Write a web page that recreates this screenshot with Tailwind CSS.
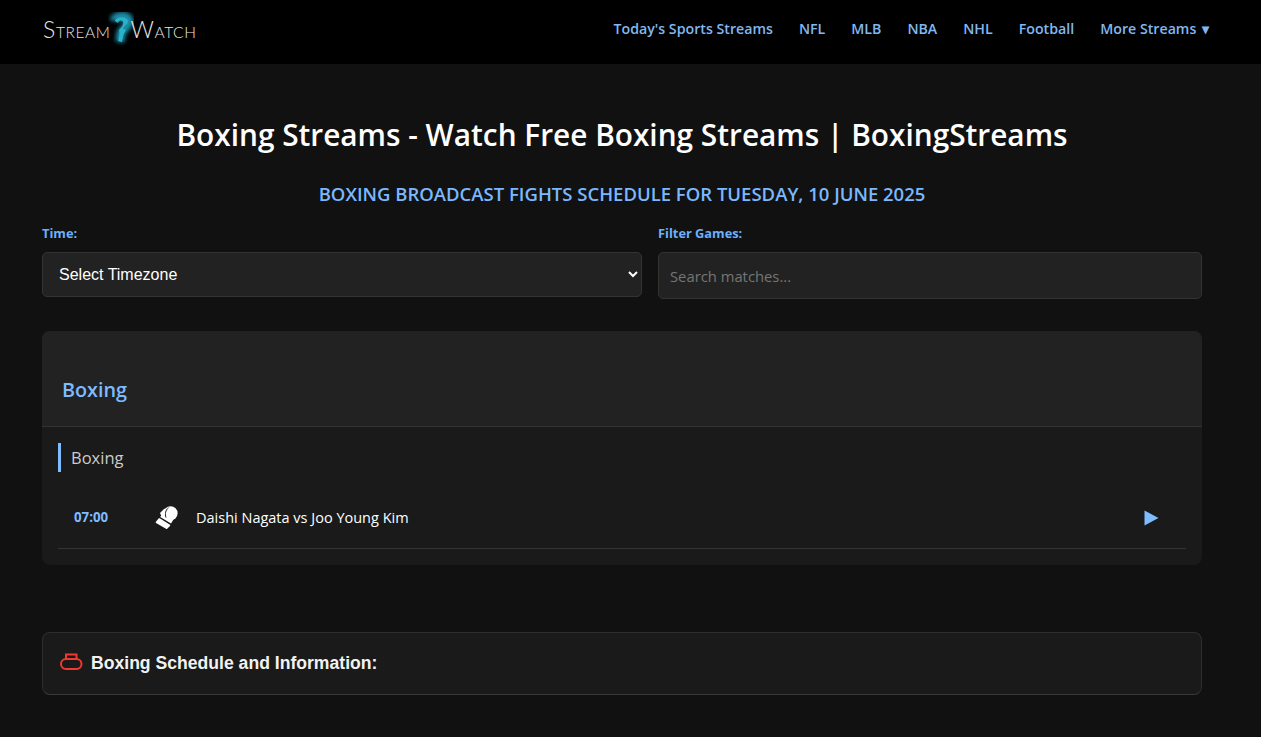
<!DOCTYPE html>
<html lang="en">
<head>
  <meta charset="UTF-8" />
  <meta name="viewport" content="width=device-width, initial-scale=1.0"/>
  <title>Boxing Streams</title>
  <script src="https://cdn.jsdelivr.net/npm/@tailwindcss/browser@4"></script>
</head>
<body class="min-h-screen bg-[#111111] text-white font-['Open_Sans','Noto_Sans',sans-serif] overflow-hidden">

<!-- Header -->
<header class="h-16 bg-black flex items-center justify-between pl-[43px] pr-[52px]">
  <a href="#" class="flex items-baseline mt-[1px] font-['Lato',sans-serif] font-light text-[#e6e6e6] leading-none tracking-[0.6px]">
    <span class="text-[23px]">S</span><span class="text-[15.5px]">TREAM</span>
    <svg class="w-[26px] h-[36px] self-center mx-[-3px] mt-[-6px]" viewBox="0 0 26 36">
      <defs>
        <filter id="glow" x="-50%" y="-50%" width="200%" height="200%"><feGaussianBlur stdDeviation="2.2"/></filter>
      </defs>
      <path d="M6 9C7 3 20 2 21 9C22 14 15 16 13 21L12 30" fill="none" stroke="#1b8ea8" stroke-width="9" filter="url(#glow)"/>
      <path d="M7 9C8 4 19 4 20 9C20 13 16 13 15 17C18 17 18 18 17 20C15 22 15 26 14 30L10 29C11 25 12 21 11 18C14 15 16 12 15 10C14 8 11 8 10 11Z" fill="#27b3cc"/>
    </svg>
    <span class="text-[23px]">W</span><span class="text-[15.5px]">ATCH</span>
  </a>
  <nav class="flex items-center gap-[26px] text-[14.2px] font-semibold text-[#80b8f0] mt-[-7px]">
    <a href="#">Today's Sports Streams</a>
    <a href="#">NFL</a>
    <a href="#">MLB</a>
    <a href="#">NBA</a>
    <a href="#">NHL</a>
    <a href="#">Football</a>
    <a href="#">More Streams <span class="ml-[2px]">▾</span></a>
  </nav>
</header>

<main class="w-[1160px] ml-[42px]">
  <h1 class="mt-[50px] text-center text-[29.8px] leading-[42px] font-semibold">Boxing Streams - Watch Free Boxing Streams | BoxingStreams</h1>
  <h2 class="mt-[26px] text-center text-[18.5px] leading-[24px] font-semibold text-[#7ab8ff] uppercase">Boxing Broadcast Fights Schedule for Tuesday, 10 June 2025</h2>

  <!-- Filters -->
  <div class="mt-[18px] flex gap-4 items-start">
    <div class="w-[600px]">
      <label class="block text-[12.8px] leading-[18px] font-bold text-[#6cb0fb] mb-[10px]">Time:</label>
      <select class="w-full h-[45px] pl-3 pr-0 bg-[#222222] border border-[#333333] rounded-[5px] text-white text-[16px] font-['Liberation_Sans',sans-serif]">
        <option>Select Timezone</option>
      </select>
    </div>
    <div class="w-[544px]">
      <label class="block text-[12.8px] leading-[18px] font-bold text-[#6cb0fb] mb-[10px]">Filter Games:</label>
      <input type="text" placeholder="Search matches..." class="w-full h-[47px] pl-[11px] pr-3 bg-[#222222] border border-[#333333] rounded-[5px] text-[14.8px] placeholder:text-[#757575] outline-none" />
    </div>
  </div>

  <!-- Schedule card -->
  <section class="mt-8 h-[234px] bg-[#1a1a1a] rounded-lg overflow-hidden">
    <div class="h-[96px] bg-[#222222] border-b border-[#333333] px-5 pt-[43px]">
      <h3 class="text-[19.8px] leading-[32px] font-semibold text-[#7dbcff]">Boxing</h3>
    </div>
    <div class="px-4 pt-4">
      <div class="h-[29px] border-l-[3px] border-[#7dbcff] pl-[10px] text-[16.5px] leading-[29px] text-[#cccccc]">Boxing</div>
      <div class="h-[77px] flex items-center border-b border-[#333333] pt-[15px]">
        <span class="w-[97px] pl-4 text-[13.3px] font-bold text-[#7dbcff]">07:00</span>
        <svg class="w-[24px] h-[24px] mr-[17px] mt-[-1px]" viewBox="0 0 24 24" fill="#ffffff">
          <circle cx="15.6" cy="8.3" r="7"/>
          <path d="M5 8L9 4C10 3.4 11 3.6 11.5 4.5L12 12L7 12.5Z"/>
          <path d="M5.2 12L9 7L20 12L16 18.5Z"/>
          <path d="M4.7 13.3L15 19.8C15.3 20 15.3 20.5 15 20.9L12.2 23.8C11.9 24.1 11.4 24.1 11 23.8L1 17.9C0.6 17.6 0.6 17.1 0.9 16.8L3.6 13.5C3.9 13.1 4.3 13.1 4.7 13.3Z"/>
          <path d="M11 12.5C9.8 9 10.5 5 13.5 2.8" fill="none" stroke="#1a1a1a" stroke-width="1"/>
        </svg>
        <span class="text-[14.5px] text-white">Daishi Nagata vs Joo Young Kim</span>
        <svg class="ml-auto mr-[27px] w-[15px] h-[16px]" viewBox="0 0 15 16"><path d="M0.5 0.5L14.5 8L0.5 15.5Z" fill="#7dbcff"/></svg>
      </div>
    </div>
  </section>

  <!-- Info -->
  <section class="mt-[67px] h-[63px] bg-[#1a1a1a] border border-[#2e2e2e] border-b-[#3a3a3a] rounded-lg flex items-center pl-[17px] gap-[8px]">
    <svg class="w-[23px] h-[17px] mt-[-4px]" viewBox="0 0 23 17" fill="none" stroke="#f0392f" stroke-width="2">
      <path d="M6 6V1.5H16.5V6"/>
      <rect x="1" y="6" width="20.5" height="10" rx="5"/>
    </svg>
    <h3 class="text-[17.6px] font-bold font-['Liberation_Sans',sans-serif] text-[#f2f2f2]">Boxing Schedule and Information:</h3>
  </section>
</main>

</body>
</html>
